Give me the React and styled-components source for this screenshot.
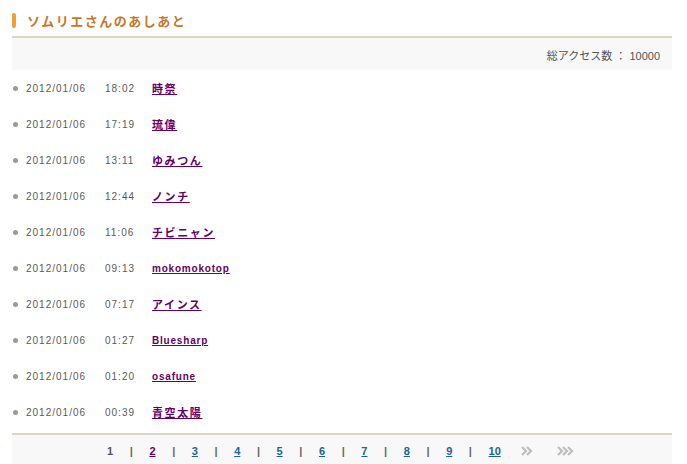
import React from 'react';
import styled, { createGlobalStyle } from 'styled-components';

const GlobalStyle = createGlobalStyle`
  body {
    margin: 0;
    background: #ffffff;
    font-family: "Liberation Sans", "Noto Sans CJK JP", sans-serif;
  }
`;

const ENTRIES = [
  { date: '2012/01/06', time: '18:02', name: '時祭' },
  { date: '2012/01/06', time: '17:19', name: '琉偉' },
  { date: '2012/01/06', time: '13:11', name: 'ゆみつん' },
  { date: '2012/01/06', time: '12:44', name: 'ノンチ' },
  { date: '2012/01/06', time: '11:06', name: 'チビニャン' },
  { date: '2012/01/06', time: '09:13', name: 'mokomokotop' },
  { date: '2012/01/06', time: '07:17', name: 'アインス' },
  { date: '2012/01/06', time: '01:27', name: 'Bluesharp' },
  { date: '2012/01/06', time: '01:20', name: 'osafune' },
  { date: '2012/01/06', time: '00:39', name: '青空太陽' },
];

const PAGES = [1, 2, 3, 4, 5, 6, 7, 8, 9, 10];

const isLatin = (s) => /^[\x00-\x7f]+$/.test(s);

function Chevrons({ count }) {
  const width = 8 + (count - 1) * 5;
  return (
    <svg width={width + 2} height="10" viewBox={`0 0 ${width + 2} 10`}>
      {Array.from({ length: count }).map((_, i) => (
        <path
          key={i}
          d={`M${1 + i * 5} 1 L${5 + i * 5} 5 L${1 + i * 5} 9`}
          fill="none"
          stroke="#bdbdbd"
          strokeWidth="2.2"
        />
      ))}
    </svg>
  );
}

function App() {
  return (
    <Page>
      <GlobalStyle />
      <Header>
        <Accent />
        <Title>ソムリエさんのあしあと</Title>
      </Header>

      <CountBar>総アクセス数 ： 10000</CountBar>

      <List>
        {ENTRIES.map((entry) => (
          <Row key={entry.time}>
            <Bullet />
            <DateText>{entry.date}</DateText>
            <TimeText>{entry.time}</TimeText>
            <NameLink href="#" $latin={isLatin(entry.name)}>
              {entry.name}
            </NameLink>
          </Row>
        ))}
      </List>

      <Pager>
        {PAGES.map((n) => (
          <React.Fragment key={n}>
            {n === 1 ? (
              <Current>1</Current>
            ) : (
              <PageLink href="#" $visited={n === 2}>
                {n}
              </PageLink>
            )}
            {n < 10 && <Sep>|</Sep>}
          </React.Fragment>
        ))}
        <Arrow>
          <Chevrons count={2} />
        </Arrow>
        <Arrow>
          <Chevrons count={3} />
        </Arrow>
      </Pager>
    </Page>
  );
}

const Page = styled.div`
  width: 660px;
  margin-left: 12px;
`;

const Header = styled.div`
  display: flex;
  align-items: center;
  gap: 11px;
  height: 38px;
  padding-top: 4px;
  box-sizing: border-box;
  border-bottom: 2px solid #ddd6c4;
`;

const Accent = styled.span`
  width: 4px;
  height: 15px;
  border-radius: 2px;
  background: #f0a030;
`;

const Title = styled.h1`
  margin: 0;
  font-size: 13px;
  font-weight: bold;
  letter-spacing: 1.5px;
  color: #c9772b;
`;

const CountBar = styled.div`
  height: 32px;
  box-sizing: border-box;
  padding: 2px 12px 0 0;
  display: flex;
  align-items: center;
  justify-content: flex-end;
  background: #f8f8f8;
  font-size: 11px;
  color: #555555;
`;

const List = styled.ul`
  list-style: none;
  margin: 0;
  padding: 0;
`;

const Row = styled.li`
  height: 36px;
  display: flex;
  align-items: center;
  font-size: 10px;
  color: #5a5a5a;
`;

const Bullet = styled.span`
  width: 5px;
  height: 5px;
  margin: 0 8px 0 1px;
  border-radius: 50%;
  background: #9a9a9a;
`;

const DateText = styled.span`
  width: 79px;
  letter-spacing: 1px;
`;

const TimeText = styled.span`
  width: 47px;
  letter-spacing: 1px;
`;

const NameLink = styled.a`
  font-size: ${(p) => (p.$latin ? '10px' : '11px')};
  letter-spacing: ${(p) => (p.$latin ? '0.8px' : '1.6px')};
  font-weight: bold;
  color: #660066;
  text-decoration: underline;
`;

const Pager = styled.div`
  height: 31px;
  margin-top: 3px;
  border-top: 2px solid #ddd6c4;
  background: #f8f8f8;
  display: flex;
  align-items: center;
  justify-content: center;
  gap: 16.6px;
  font-size: 11px;
  font-weight: bold;
`;

const Current = styled.span`
  color: #555555;
`;

const PageLink = styled.a`
  color: ${(p) => (p.$visited ? '#660066' : '#1a6496')};
  text-decoration: underline;
`;

const Sep = styled.span`
  color: #666666;
`;

const Arrow = styled.span`
  display: flex;
  align-items: center;
  margin-left: 4px;
`;

export default App;
